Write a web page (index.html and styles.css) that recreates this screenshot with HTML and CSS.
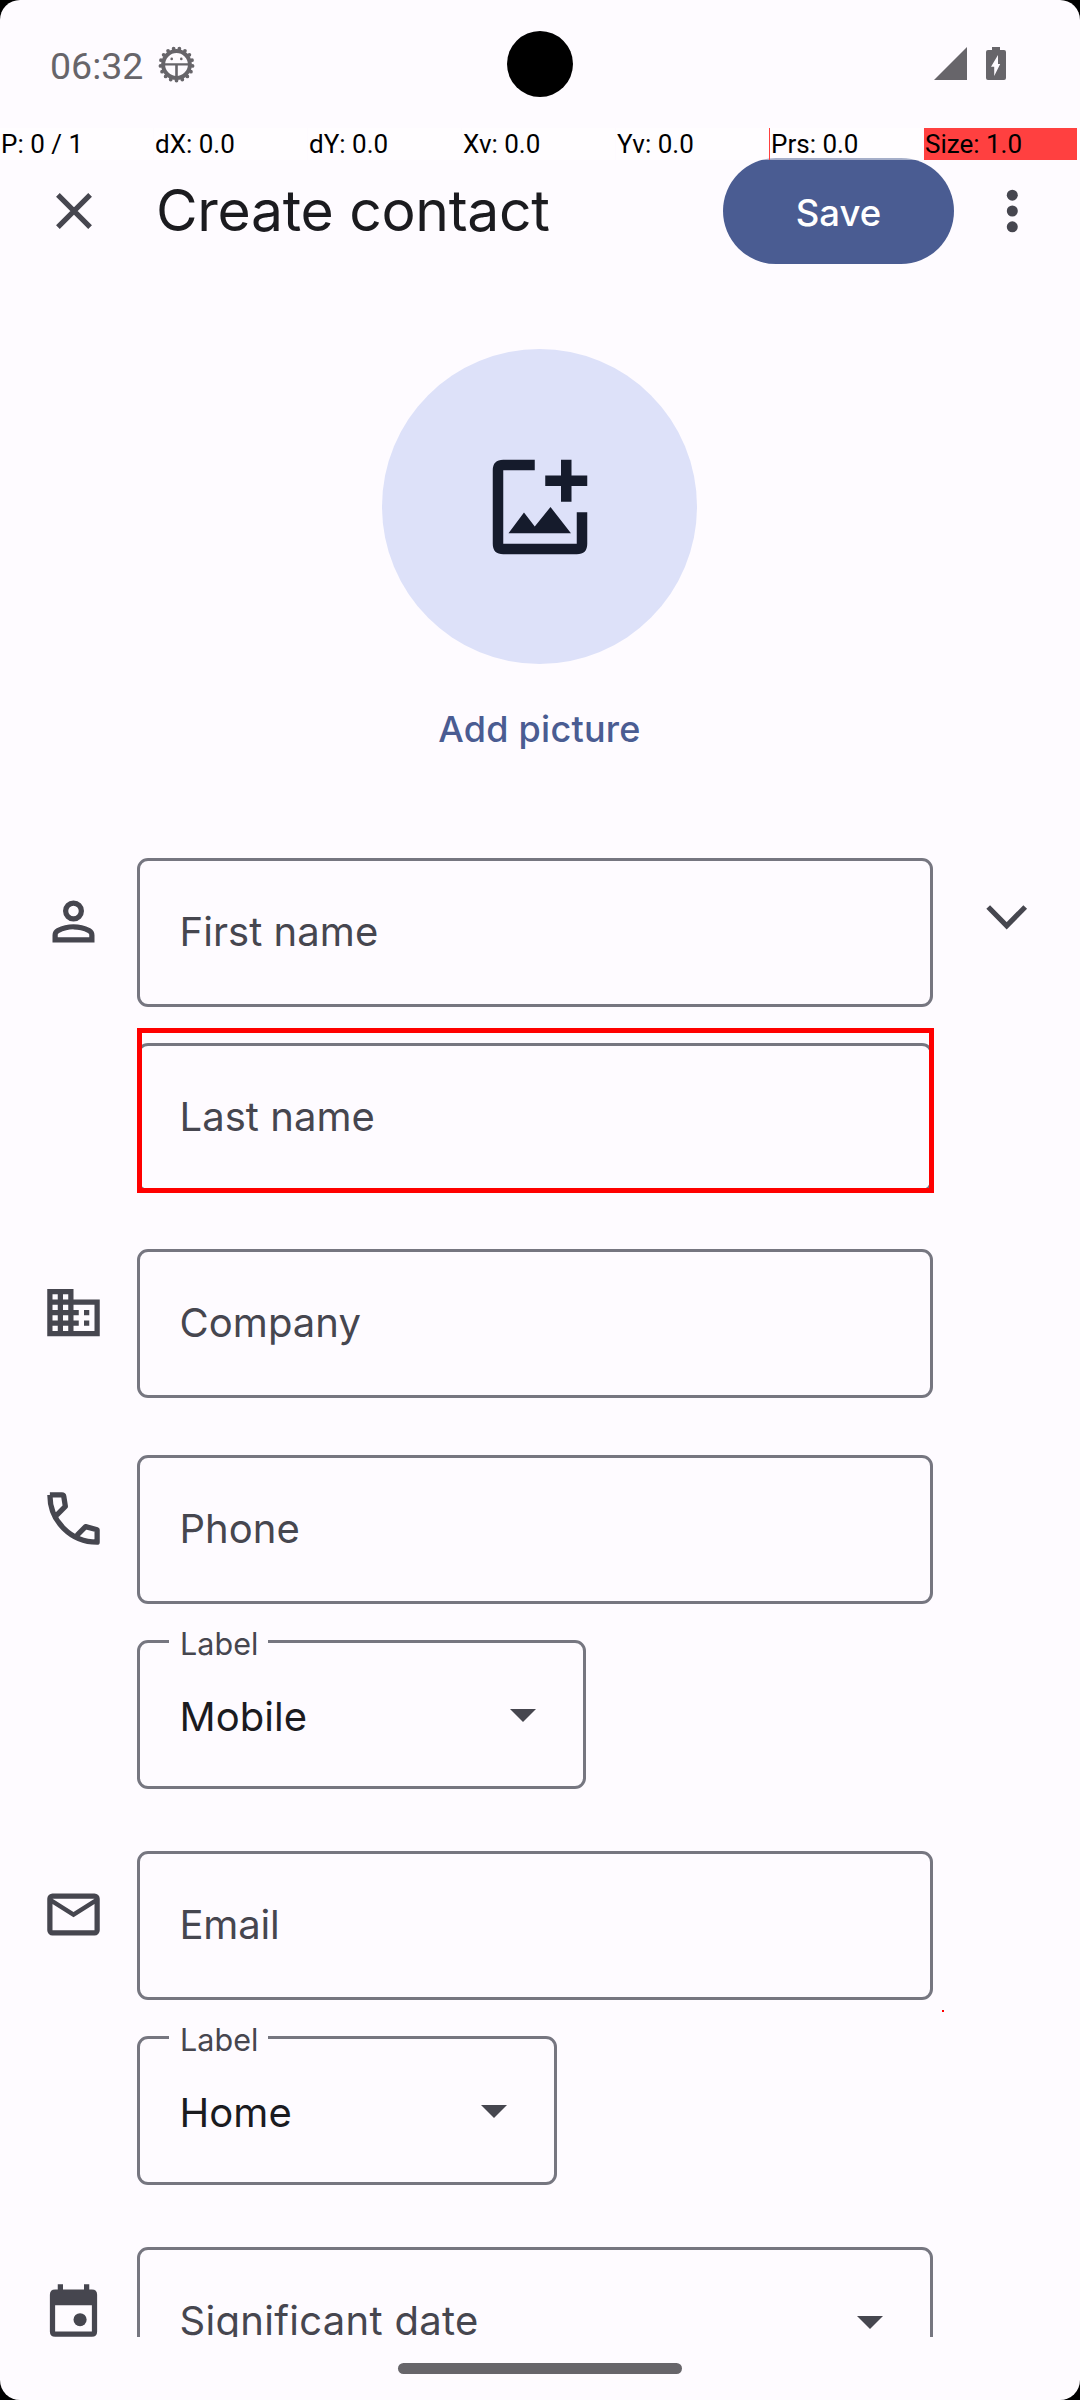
FILE: index.html
```html
<!DOCTYPE html>
<html lang="en">
<head>
<meta charset="utf-8">
<title>Create contact</title>
<link rel="stylesheet" href="styles.css">
</head>
<body>
<div class="screen">
  <header class="status-bar">
    <div class="status-left">
      <span class="clock">06:32</span>
      <svg class="bug" viewBox="-18.5 -18.5 37 37">
        <circle r="13.4" fill="none" stroke="currentColor" stroke-width="4"/>
        <circle r="16.1" fill="none" stroke="currentColor" stroke-width="3.8" stroke-linecap="round" pathLength="17" stroke-dasharray="0 1" transform="rotate(90)"/>
        <path d="M-13 -1.3H13V1.1H1.3V13H-1.3V1.1H-13Z" fill="currentColor"/>
        <circle cx="-4.8" cy="-5.6" r="1.3" fill="currentColor"/><circle cx="4.8" cy="-5.6" r="1.3" fill="currentColor"/>
      </svg>
    </div>
    <div class="camera"></div>
    <div class="status-right">
      <svg class="signal" viewBox="0 0 33 33"><path d="M33 0V33H0Z" fill="currentColor"/></svg>
      <svg class="battery" viewBox="0 0 20 33"><path fill="currentColor" fill-rule="evenodd" d="M6 0H14V3H18Q20 3 20 5V31Q20 33 18 33H2Q0 33 0 31V5Q0 3 2 3H6ZM12 8L5 19.7H8.2V29L14.2 17H12Z"/></svg>
    </div>
  </header>

  <div class="app-bar">
    <svg class="close" viewBox="0 0 36 36"><path d="M1.9 1.9L34.1 34.1M34.1 1.9L1.9 34.1" stroke="currentColor" stroke-width="5.2"/></svg>
    <h1 class="title">Create contact</h1>
    <button class="save">Save</button>
    <svg class="more" viewBox="0 0 12 44"><circle cx="6.3" cy="6.2" r="5.5"/><circle cx="6.3" cy="22" r="5.5"/><circle cx="6.3" cy="37.8" r="5.5"/></svg>
  </div>

  <main class="content">
    <div class="photo">
      <div class="avatar">
        <svg viewBox="0 0 24 24"><path d="M11 3H5Q3 3 3 5V19Q3 21 5 21H19Q21 21 21 19V13H19V19H5V5H11ZM16 3H18V6H21V8H18V11H16V8H13V6H16ZM6 17L8.95 13.05L11 15.7L14 12L17.9 17Z"/></svg>
      </div>
      <a class="add-picture">Add picture</a>
    </div>

    <section class="group">
      <svg class="icon" viewBox="0 0 24 24"><path d="M12 12q-1.65 0-2.825-1.175T8 8t1.175-2.825T12 4t2.825 1.175T16 8t-1.175 2.825T12 12m0-2q.825 0 1.413-.587T14 8t-.587-1.412T12 6t-1.412.588T10 8t.588 1.413T12 10M4 20v-2.8q0-.85.438-1.563T5.6 14.55q1.55-.775 3.15-1.163T12 13t3.25.388 3.15 1.162q.725.375 1.163 1.088T20 17.2V20zm2-2h12v-.8q0-.275-.137-.5t-.363-.35q-1.35-.675-2.725-1.012T12 15t-2.775.338T6.5 16.35q-.225.125-.363.35T6 17.2z"/></svg>
      <div class="fields">
        <div class="field">First name</div>
        <div class="field highlighted">Last name</div>
      </div>
      <svg class="expand" viewBox="0 0 42 25"><path d="M2.2 2L20.7 20.8L39.2 2" fill="none" stroke="currentColor" stroke-width="5.2"/></svg>
    </section>

    <section class="group">
      <svg class="icon" viewBox="0 0 24 24"><path d="M12 7V3H2v18h20V7zM6 19H4v-2h2zm0-4H4v-2h2zm0-4H4V9h2zm0-4H4V5h2zm4 12H8v-2h2zm0-4H8v-2h2zm0-4H8V9h2zm0-4H8V5h2zm10 12h-8v-2h2v-2h-2v-2h2v-2h-2V9h8zm-2-8h-2v2h2zm0 4h-2v2h2z"/></svg>
      <div class="fields">
        <div class="field">Company</div>
      </div>
    </section>

    <section class="group">
      <svg class="icon" viewBox="0 0 24 24"><path fill="none" stroke="currentColor" stroke-width="2" stroke-linejoin="round" d="M3 3H7.6Q8.2 3 8.3 3.6L8.9 7.4L5.6 10.7M3 3C3 13 11 21 21 21V16.3L16.6 15.1L13.3 18.4"/></svg>
      <div class="fields">
        <div class="field">Phone</div>
        <div class="select mobile"><span class="label">Label</span>Mobile<i class="caret"></i></div>
      </div>
    </section>

    <section class="group">
      <svg class="icon" viewBox="0 0 24 24"><path d="M4 20q-.825 0-1.412-.587T2 18V6q0-.825.588-1.412T4 4h16q.825 0 1.413.588T22 6v12q0 .825-.587 1.413T20 20zm8-7L4 8v10h16V8zm0-2l8-5H4zM4 8V6v12z"/></svg>
      <div class="fields">
        <div class="field email">Email</div>
        <div class="select home"><span class="label">Label</span>Home<i class="caret"></i></div>
      </div>
    </section>

    <section class="group">
      <svg class="icon" viewBox="0 0 24 24"><path fill-rule="evenodd" d="M6 2H8V4H16V2H18V4H19Q21 4 21 6V20Q21 22 19 22H5Q3 22 3 20V6Q3 4 5 4H6ZM5 10V20H19V10Z"/><circle cx="14.5" cy="15.5" r="2.5"/></svg>
      <div class="fields">
        <div class="field date">Significant date<i class="caret"></i></div>
      </div>
    </section>
  </main>

  <footer class="nav-bar"><div class="handle"></div></footer>

  <div class="pointer-bar">
    <span>P: 0 / 1</span><span>dX: 0.0</span><span>dY: 0.0</span><span>Xv: 0.0</span><span>Yv: 0.0</span><span class="prs">Prs: 0.0</span><span class="size">Size: 1.0</span>
  </div>
  <div class="touch-dot"></div>
</div>
</body>
</html>
```
FILE: styles.css
```css
*, *::after { box-sizing: border-box; }
body { margin: 0; background: #000; font-family: Inter, Roboto, sans-serif; color: #46464f; }
svg { display: block; fill: currentColor; flex: none; }

.screen { position: relative; display: flex; flex-direction: column; width: 1080px; height: 2400px; border-radius: 20px; overflow: hidden; background: #fefbff; }

.status-bar { position: relative; flex: none; display: flex; justify-content: space-between; height: 128px; padding: 46px 74px 0 50px; color: #67656a; }
.status-left { display: flex; gap: 15px; }
.clock { font: 37.5px/40px Roboto, sans-serif; }
.bug { width: 37px; height: 37px; }
.camera { position: absolute; left: 507px; top: 31px; width: 66px; height: 66px; border-radius: 50%; background: #000; }
.status-right { display: flex; gap: 19px; padding-top: 1px; }
.signal { width: 33px; height: 33px; }
.battery { width: 20px; height: 33px; }

.app-bar { flex: none; display: flex; align-items: center; height: 166px; padding: 0 62px 0 56px; }
.close { width: 36px; height: 36px; }
.title { flex: 1; margin: 0 0 0 64px; font-size: 57px; line-height: 68px; font-weight: 400; letter-spacing: -0.3px; color: #1b1b1f; }
.save { width: 231px; height: 106px; margin-right: 52px; padding: 3px 0 0; border: 0; border-radius: 53px; background: #4a5c92; color: #fff; font: 500 36.5px/44px Inter, sans-serif; }
.more { width: 12px; height: 44px; }

.content { flex: none; height: 2043px; overflow: hidden; padding-top: 55px; }
.photo { display: flex; flex-direction: column; align-items: center; width: 1079px; height: 509px; }
.avatar { display: flex; align-items: center; justify-content: center; width: 315px; height: 315px; border-radius: 50%; background: #dde1f9; color: #151b2c; }
.avatar svg { width: 126px; height: 126px; }
.add-picture { margin-top: 43px; font-weight: 500; font-size: 36px; line-height: 44px; letter-spacing: 0.25px; color: #4a5c92; }

.group { display: grid; grid-template-columns: 95px 796px auto; align-items: start; padding-left: 42px; margin-bottom: 57px; }
.group:nth-of-type(n+3) { margin-bottom: 62px; }
.icon { width: 63px; height: 63px; margin-top: 32px; }
.fields { display: flex; flex-direction: column; gap: 36px; }
.expand { width: 42px; height: 25px; margin: 47px 0 0 53px; }
.field, .select { position: relative; height: 149px; padding: 47px 39.5px 0; border: 3px solid #767680; border-radius: 11px; font-size: 40px; line-height: 48px; letter-spacing: 0.05px; white-space: nowrap; }
.select { padding-top: 50px; color: #1b1b1f; }
.email { letter-spacing: -0.2px; }
.date { letter-spacing: 0.3px; }
.mobile { width: 449px; }
.home { width: 420px; }
.highlighted::after { content: ""; position: absolute; left: -3px; top: -18px; width: 797px; height: 165px; border: 5px solid #f00; }
.label { position: absolute; left: 29px; top: -18px; width: 99px; padding-left: 11px; background: #fefbff; font-size: 30.5px; line-height: 38px; color: #46464f; }
.caret { position: absolute; right: 47px; top: 66px; width: 26px; height: 13px; background: #46464f; clip-path: polygon(0 0, 100% 0, 50% 100%); }

.nav-bar { display: flex; justify-content: center; height: 63px; padding-top: 26px; }
.handle { width: 284px; height: 11px; border-radius: 6px; background: #67656a; }

/* Pointer location readout drawn over the app */
.pointer-bar { position: absolute; left: 0; top: 128px; display: flex; gap: 1px; height: 32px; font: 26px/32px Roboto, sans-serif; color: #000; }
.pointer-bar span { width: 153px; padding-left: 1px; background: rgba(255, 255, 255, 0.5); white-space: nowrap; }
.pointer-bar .prs { box-shadow: -1px 0 #ff4040; }
.pointer-bar .size { background: #ff4040; }
.touch-dot { position: absolute; left: 942px; top: 2010px; width: 2px; height: 2px; background: #f00; }
```
